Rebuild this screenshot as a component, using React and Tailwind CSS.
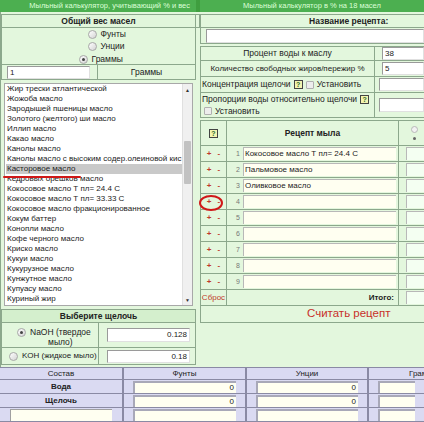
import React from "react";

const oils = [
  "Жир трески атлантической",
  "Жожоба масло",
  "Зародышей пшеницы масло",
  "Золотого (желтого) ши масло",
  "Иллип масло",
  "Какао масло",
  "Канолы масло",
  "Канолы масло с высоким содер.олеиновой кис",
  "Касторовое масло",
  "Кедровых орешков масло",
  "Кокосовое масло Т пл= 24.4 С",
  "Кокосовое масло Т пл= 33.33 С",
  "Кокосовое масло фракционированное",
  "Кокум баттер",
  "Конопли масло",
  "Кофе черного масло",
  "Криско масло",
  "Кукуи масло",
  "Кукурузное масло",
  "Кунжутное масло",
  "Купуасу масло",
  "Куриный жир",
];

const recipe = ["Кокосовое масло Т пл= 24.4 С", "Пальмовое масло", "Оливковое масло", "", "", "", "", "", ""];

function Radio({ checked }) {
  return (
    <span className="w-[9px] h-[9px] shrink-0 rounded-full border border-[#a8a8a8] bg-gradient-to-br from-white to-[#d4d4d4] flex items-center justify-center">
      {checked && <span className="w-[3px] h-[3px] rounded-full bg-[#444]" />}
    </span>
  );
}

function Check() {
  return <span className="inline-block shrink-0 w-[8px] h-[8px] border border-[#b0b0b0] bg-[#ededed] rounded-[1px]" />;
}

function Help() {
  return (
    <span className="inline-flex shrink-0 w-[9px] h-[9px] items-center justify-center border border-[#444] bg-[#f4f4b0] text-[7px] font-bold leading-none text-[#2a6a2a]">
      ?
    </span>
  );
}

function Field({ value = "", className = "" }) {
  return (
    <div className={`h-[13px] bg-white border border-[#9a9a9a] border-r-[#e0e0e0] border-b-[#e0e0e0] px-[2px] text-[8px] leading-[11px] ${className}`}>
      {value}
    </div>
  );
}

export default function App() {
  return (
    <div className="relative w-[424px] h-[422px] overflow-hidden bg-[#e3f7dd] text-[#222] text-[8.5px] leading-none whitespace-nowrap" style={{ fontFamily: '"Liberation Sans", Arial, sans-serif' }}>
      {/* top bars */}
      <div className="flex h-[12px] bg-[#3f9e3f]">
        <div className="w-[196px] shrink-0 bg-[#4caf50] text-[#dcffd8] text-[7.5px] flex items-center justify-end pr-[6px]">
          Мыльный калькулятор, учитывающий % и вес
        </div>
        <div className="w-[4px] shrink-0" />
        <div className="flex-1 bg-[#4caf50] text-[#dcffd8] text-[7.5px] flex items-center justify-center">
          Мыльный калькулятор в % на 18 масел
        </div>
      </div>

      <div className="flex h-[355px]">
        {/* left panel */}
        <div className="w-[196px] shrink-0 flex flex-col border-l border-[#8ca88c]">
          <div className="mt-[2px] h-[14px] border border-[#8ca88c] bg-[#e1f6db] flex items-center justify-center font-bold">
            Общий вес масел
          </div>
          <div className="h-[36px] border-x border-[#8ca88c] flex flex-col items-center justify-center gap-[3.5px] pt-[1px]">
            <div className="flex items-center gap-[4px] w-[40px] ml-[18px]">
              <Radio /> <span>Фунты</span>
            </div>
            <div className="flex items-center gap-[4px] w-[40px] ml-[18px]">
              <Radio /> <span>Унции</span>
            </div>
            <div className="flex items-center gap-[4px] w-[46px] ml-[6px]">
              <Radio checked /> <span>Граммы</span>
            </div>
          </div>
          <div className="h-[16px] flex border border-[#8ca88c]">
            <div className="w-[96px] shrink-0 border-r border-[#8ca88c] flex items-center pl-[5px]">
              <Field value="1" className="w-[83px]" />
            </div>
            <div className="flex-1 flex items-center justify-center">Граммы</div>
          </div>
          <div className="mt-[3px] mx-[3px] h-[223px] bg-white border border-[#a8a8a8] flex">
            <div className="flex-1 min-w-0 flex flex-col pl-[1px] text-[8px]">
              {oils.map((o) => (
                <div
                  key={o}
                  className={`h-[10px] leading-[10px] pl-[1px] overflow-hidden ${o === "Касторовое масло" ? "bg-[#c9c9c9]" : ""}`}
                >
                  {o}
                </div>
              ))}
            </div>
            <div className="w-[10px] shrink-0 bg-[#f0f0f0] border-l border-[#e0e0e0] flex flex-col items-center">
              <span className="text-[5px] mt-[4px] text-[#333]">▲</span>
              <div className="mt-[48px] w-[7px] h-[43px] bg-[#c2c2c2] rounded-[1px]" />
              <span className="text-[5px] mt-auto mb-[2px] text-[#333]">▼</span>
            </div>
          </div>
          <div className="mt-[3px] h-[14px] border border-[#8ca88c] bg-[#d4efcd] flex items-center justify-center font-bold">
            Выберите щелочь
          </div>
          <div className="h-[25px] flex border-x border-b border-[#8ca88c]">
            <div className="w-[97px] shrink-0 border-r border-[#8ca88c] flex items-start pt-[4px] pl-[15px] gap-[4px]">
              <span className="mt-[1px]"><Radio checked /></span>
              <span className="text-center leading-[10px]">
                NaOH (твердое
                <br />
                мыло)
              </span>
            </div>
            <div className="flex-1 flex items-center pl-[8px]">
              <Field value="0.128" className="w-[83px] text-right h-[14px]" />
            </div>
          </div>
          <div className="h-[17px] flex border-x border-b border-[#8ca88c]">
            <div className="w-[97px] shrink-0 border-r border-[#8ca88c] flex items-center pl-[7px] gap-[4px] text-[8px]">
              <Radio /> <span>KOH (жидкое мыло)</span>
            </div>
            <div className="flex-1 flex items-center pl-[8px]">
              <Field value="0.18" className="w-[83px] text-right" />
            </div>
          </div>
        </div>

        <div className="w-[4px] shrink-0 flex flex-col pt-[2px]">
          <div className="h-[14px] border-r border-y border-[#8ca88c]" />
        </div>

        {/* right panel */}
        <div className="flex-1 min-w-0 flex flex-col">
          <div className="mt-[2px] h-[14px] border-y border-l border-[#8ca88c] flex items-center pl-[108px] font-bold">
            Название рецепта:
          </div>
          <div className="h-[16px] border-l border-b border-[#8ca88c] flex items-center pl-[5px]">
            <Field className="flex-1 h-[14px] bg-white" />
          </div>
          <div className="mt-[2px] h-[15px] flex border-y border-l border-[#8ca88c]">
            <div className="w-[174px] shrink-0 border-r border-[#8ca88c] flex items-center justify-center">Процент воды к маслу</div>
            <div className="flex-1 flex items-center pl-[7px]">
              <Field value="38" className="flex-1" />
            </div>
          </div>
          <div className="h-[16px] flex border-b border-l border-[#8ca88c]">
            <div className="w-[174px] shrink-0 border-r border-[#8ca88c] flex items-center justify-center text-[8px]">Количество свободных жиров/пережир %</div>
            <div className="flex-1 flex items-center pl-[7px]">
              <Field value="5" className="flex-1" />
            </div>
          </div>
          <div className="h-[16px] flex border-b border-l border-[#8ca88c]">
            <div className="w-[174px] shrink-0 border-r border-[#8ca88c] flex items-center pl-[1px] gap-[3px]">
              <span>Концентрация щелочи</span> <Help /> <Check /> <span>Установить</span>
            </div>
            <div className="flex-1 flex items-center pl-[4px]">
              <Field className="flex-1 h-[13px]" />
            </div>
          </div>
          <div className="h-[25px] flex border-b border-l border-[#8ca88c]">
            <div className="w-[174px] shrink-0 border-r border-[#8ca88c] flex flex-col justify-center pl-[1px] gap-[3px]">
              <div className="flex items-center gap-[3px]">
                <span>Пропорции воды относительно щелочи</span> <Help />
              </div>
              <div className="flex items-center gap-[3px] pl-[2px]">
                <Check /> <span>Установить</span>
              </div>
            </div>
            <div className="flex-1 flex items-center pl-[4px]">
              <Field className="flex-1 h-[14px]" />
            </div>
          </div>

          {/* recipe table */}
          <div className="mt-[2px] flex flex-col border-l border-t border-[#8ca88c]">
            <div className="h-[25px] flex border-b border-[#8ca88c]">
              <div className="w-[26px] shrink-0 border-r border-[#8ca88c] flex items-center justify-center">
                <Help />
              </div>
              <div className="w-[172px] shrink-0 border-r border-[#8ca88c] flex items-center justify-center font-bold">Рецепт мыла</div>
              <div className="flex-1 flex flex-col items-center pt-[5px] pl-[6px] gap-[4px]">
                <span className="w-[7px] h-[7px] rounded-full border border-[#b8b8b8] bg-[#f2f2f2]" />
                <span className="w-[3px] h-[3px] rounded-full bg-[#666]" />
              </div>
            </div>
            {recipe.map((r, i) => (
              <div key={i} className="h-[16px] flex border-b border-[#8ca88c]">
                <div className="w-[26px] shrink-0 border-r border-[#8ca88c] flex items-center justify-center gap-[6px] text-[#c03a2b] font-bold text-[8px]">
                  <span>+</span>
                  <span>-</span>
                </div>
                <div className="w-[172px] shrink-0 border-r border-[#8ca88c] flex items-center pl-[8px] gap-[3px]">
                  <span className="w-[5px] text-[7px] text-[#777] text-right">{i + 1}</span>
                  <div className="flex-1 mr-[2px] h-[13px] bg-[#fffff1] border-l border-t border-[#b8b8b8] text-[8px] leading-[12px] pl-[1px] overflow-hidden">
                    {r}
                  </div>
                </div>
                <div className="flex-1 flex items-center pl-[7px]">
                  <div className="flex-1 h-[13px] bg-[#f4fff2] border-l border-t border-[#b8b8b8]" />
                </div>
              </div>
            ))}
            <div className="h-[16px] flex border-b border-[#8ca88c]">
              <div className="w-[26px] shrink-0 border-r border-[#8ca88c] flex items-center justify-center text-[#c03a2b] text-[8px]">Сброс</div>
              <div className="w-[172px] shrink-0 border-r border-[#8ca88c] flex items-center justify-end pr-[4px] font-bold text-[8px]">Итого:</div>
              <div className="flex-1 flex items-center pl-[7px]">
                <div className="flex-1 h-[13px] bg-[#f4fff2] border-l border-t border-[#b8b8b8]" />
              </div>
            </div>
            <div className="h-[17px] flex items-center border-b border-[#8ca88c] pl-[106px] text-[11.5px] text-[#c8302a]">
              Считать рецепт
            </div>
          </div>
        </div>
      </div>

      {/* bottom table */}
      <div className="h-[55px] bg-[#dadaf2] flex flex-col border-t border-[#8a8aa4] text-[8px]">
        <div className="h-[14px] flex border-b border-[#8a8aa4]">
          <div className="w-[124px] shrink-0 border-r-2 border-[#8a8aa4] flex items-center justify-center">Состав</div>
          <div className="w-[123px] shrink-0 border-r-2 border-[#8a8aa4] flex items-center justify-center">Фунты</div>
          <div className="w-[122px] shrink-0 border-r-2 border-[#8a8aa4] flex items-center justify-center">Унции</div>
          <div className="flex-1 min-w-0 flex items-center pl-[40px]">Граммы</div>
        </div>
        {["Вода", "Щелочь", ""].map((label, i) => (
          <div key={i} className="h-[16px] flex border-b border-[#8a8aa4]">
            <div className="w-[124px] shrink-0 border-r-2 border-[#8a8aa4] flex items-center justify-center font-bold">
              {label || <div className="mx-[10px] w-[104px] h-[12px] bg-[#fffff1] border-l border-t border-[#a0a0a0]" />}
            </div>
            {[0, 1, 2].map((c) => (
              <div key={c} className={`${c === 0 ? "w-[123px] shrink-0" : c === 1 ? "w-[122px] shrink-0" : "flex-1 min-w-0"} ${c < 2 ? "border-r-2" : ""} border-[#8a8aa4] flex items-center pl-[9px] pr-[9px]`}>
                <div className="flex-1 h-[12px] bg-[#fffff1] border-l-2 border-t-2 border-[#a8a8b8] text-right pr-[2px] leading-[10px]">
                  {label && c < 2 ? "0" : ""}
                </div>
              </div>
            ))}
          </div>
        ))}
      </div>

      {/* annotations */}
      <div className="absolute left-[3px] top-[176px] w-[78px] h-[2px] bg-[#d01818] rounded-full" />
      <div className="absolute left-[199px] top-[195px] w-[24px] h-[16px] rounded-[50%] border-2 border-[#d01818]" />
    </div>
  );
}
